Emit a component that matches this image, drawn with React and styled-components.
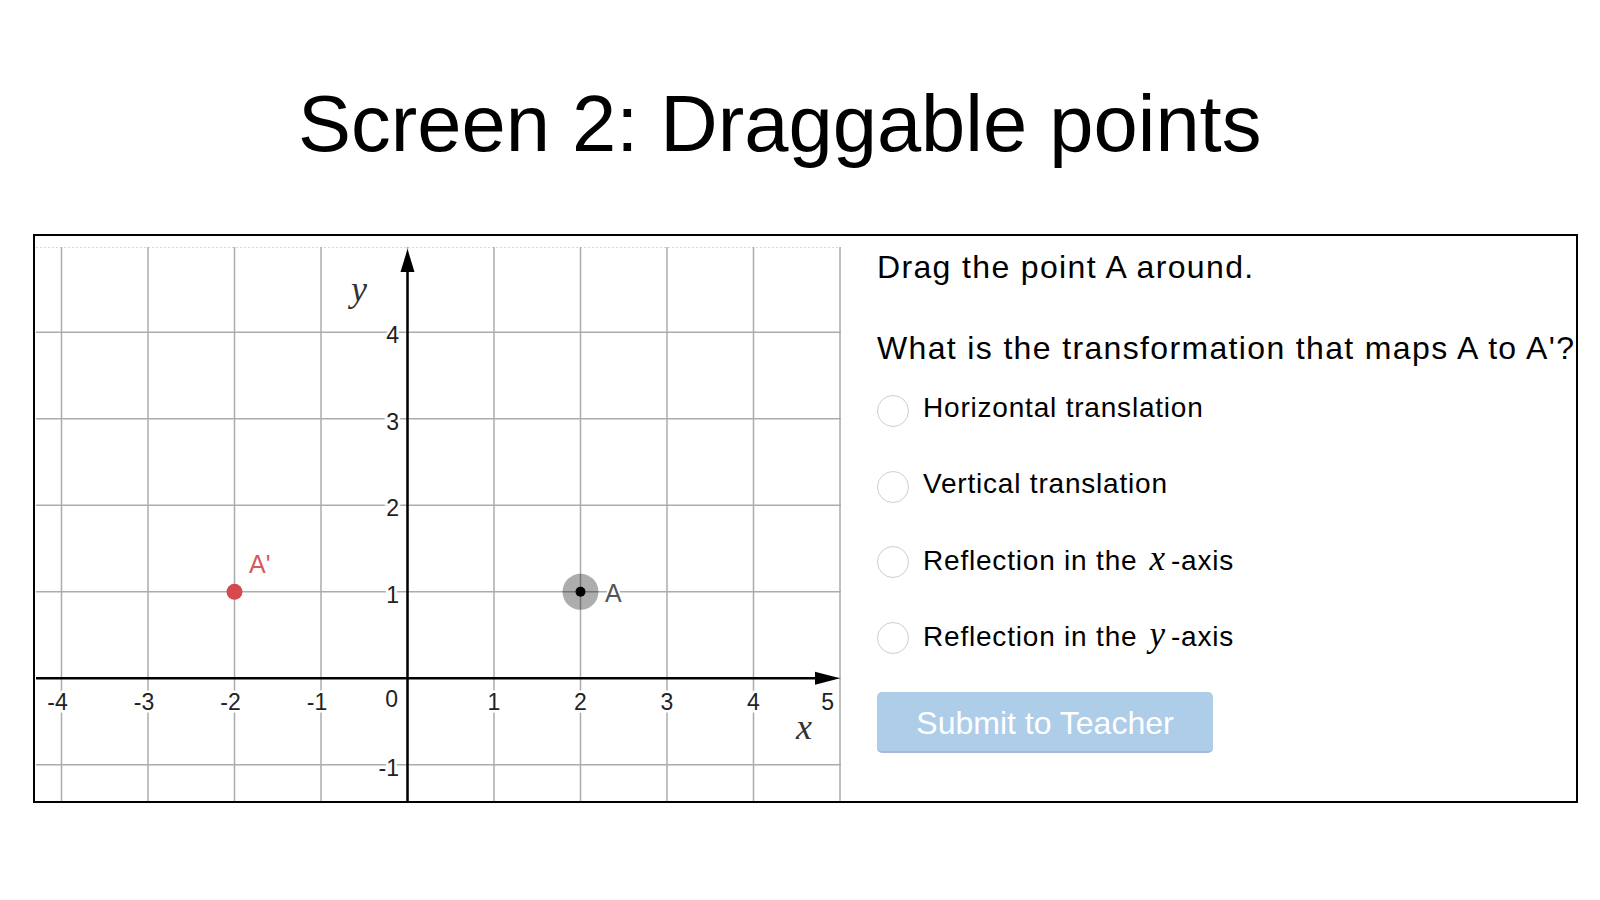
import React from 'react';
import styled, { createGlobalStyle } from 'styled-components';

const GlobalStyle = createGlobalStyle`
  html, body {
    margin: 0;
    padding: 0;
    background: #fff;
  }
  body {
    font-family: 'Liberation Sans', Arial, sans-serif;
    color: #000;
  }
`;

const Page = styled.div`
  width: 1600px;
  height: 900px;
  display: flex;
  flex-direction: column;
  padding-top: 84px;
  box-sizing: border-box;
`;

const Title = styled.h1`
  margin: 0 0 70px;
  padding-left: 298px;
  font-size: 79.5px;
  line-height: 80px;
  font-weight: normal;
  color: #000;
`;

const Card = styled.div`
  margin-left: 33px;
  width: 1545px;
  height: 569px;
  box-sizing: border-box;
  border: 2px solid #000;
  display: flex;
  overflow: hidden;
`;

const GraphPane = styled.div`
  padding: 11px 0 0 1px;
  flex: none;
`;

const Side = styled.div`
  flex: 1;
  padding: 13px 0 0 36px;
  display: flex;
  flex-direction: column;
  align-items: flex-start;
`;

const Prompt = styled.p`
  margin: ${(p) => p.$gap || 0} 0 0;
  font-size: 32px;
  line-height: 36px;
  letter-spacing: 1.35px;
  white-space: nowrap;
`;

const Choices = styled.div`
  margin-top: 29px;
  display: flex;
  flex-direction: column;
  gap: 43.5px;
`;

const Choice = styled.label`
  display: flex;
  align-items: flex-start;
  gap: 14px;
  cursor: pointer;
`;

const Radio = styled.span`
  width: 32px;
  height: 32px;
  box-sizing: border-box;
  border-radius: 50%;
  border: 1px solid #cfcfcf;
  background: #fff;
  flex: none;
`;

const ChoiceText = styled.span`
  margin-top: -3px;
  font-size: 28px;
  line-height: 32px;
  letter-spacing: 0.8px;
  white-space: nowrap;
`;

const MathVar = styled.i`
  font-family: 'Liberation Serif', 'Times New Roman', serif;
  font-size: 35px;
  letter-spacing: 0;
  margin: 0 6px 0 12px;
`;

const SubmitButton = styled.button`
  margin-top: 38px;
  width: 336px;
  height: 61px;
  border: none;
  border-bottom: 2px solid #a7b7df;
  border-radius: 5px;
  background: #aecde9;
  color: #fff;
  font-family: 'Liberation Sans', Arial, sans-serif;
  font-size: 32px;
  padding: 4px 0 0;
  cursor: default;
`;

const AxisNum = styled.text`
  font-family: 'Liberation Sans', Arial, sans-serif;
  font-size: 23px;
  fill: #222;
  stroke: #fff;
  stroke-width: 5px;
  paint-order: stroke;
`;

const PointLabel = styled.text`
  font-family: 'Liberation Sans', Arial, sans-serif;
  font-size: 25px;
  fill: ${(p) => p.$color};
  stroke: #fff;
  stroke-width: 4px;
  paint-order: stroke;
`;

const AxisVar = styled.text`
  font-family: 'Liberation Serif', 'Times New Roman', serif;
  font-style: italic;
  font-size: 36px;
  fill: #333;
`;

// graph geometry (px inside the svg)
const W = 805;
const H = 554;
const U = 86.5;
const OX = 371.5;
const OY = 431.3;
const px = (x) => OX + x * U;
const py = (y) => OY - y * U;

const xs = [-4, -3, -2, -1, 0, 1, 2, 3, 4, 5];
const ys = [-1, 0, 1, 2, 3, 4];

const Graph = () => (
  <svg width={W} height={H} viewBox={`0 0 ${W} ${H}`}>
    <line x1="0" y1="0.5" x2={W} y2="0.5" stroke="#d8d8d8" strokeDasharray="2 2" />
    {xs.map((x) => (
      <line key={`v${x}`} x1={px(x)} y1="0" x2={px(x)} y2={H} stroke="#ababab" strokeWidth="1.5" />
    ))}
    {ys.map((y) => (
      <line key={`h${y}`} x1="0" y1={py(y)} x2={W} y2={py(y)} stroke="#ababab" strokeWidth="1.5" />
    ))}

    {[-4, -3, -2, -1, 1, 2, 3, 4].map((x) => (
      <AxisNum key={`xl${x}`} x={x < 0 ? px(x) - 4 : px(x)} y="463" textAnchor="middle">
        {x < 0 ? `-${-x}` : x}
      </AxisNum>
    ))}
    <AxisNum x="798" y="463" textAnchor="end">5</AxisNum>
    <AxisNum x="362" y="460" textAnchor="end">0</AxisNum>
    {[4, 3, 2, 1, -1].map((y) => (
      <AxisNum key={`yl${y}`} x="363" y={py(y) + 11} textAnchor="end">
        {y < 0 ? `-${-y}` : y}
      </AxisNum>
    ))}

    {/* axes */}
    <line x1="0" y1={OY} x2={W - 22} y2={OY} stroke="#000" strokeWidth="2.5" />
    <polygon points={`${W - 1},${OY} ${W - 26},${OY - 6.5} ${W - 26},${OY + 6.5}`} fill="#000" />
    <line x1={OX} y1={H} x2={OX} y2="22" stroke="#000" strokeWidth="2.5" />
    <polygon points={`${OX},2 ${OX - 7},25 ${OX + 7},25`} fill="#000" />

    <AxisVar x="315" y="54">y</AxisVar>
    <AxisVar x="760" y="492">x</AxisVar>

    {/* A' */}
    <circle cx={px(-2)} cy={py(1)} r="8" fill="#d64a4f" />
    <PointLabel x="213" y="326" $color="#d65a5e">A'</PointLabel>

    {/* A */}
    <circle cx={px(2)} cy={py(1)} r="18" fill="#000" fillOpacity="0.32" />
    <circle cx={px(2)} cy={py(1)} r="5" fill="#000" />
    <PointLabel x="569" y="355" $color="#555">A</PointLabel>
  </svg>
);

const options = [
  { id: 'h', text: 'Horizontal translation' },
  { id: 'v', text: 'Vertical translation' },
  { id: 'x', pre: 'Reflection in the', v: 'x', post: '-axis' },
  { id: 'y', pre: 'Reflection in the', v: 'y', post: '-axis' },
];

const App = () => (
  <>
    <GlobalStyle />
    <Page>
      <Title>Screen 2: Draggable points</Title>
      <Card>
        <GraphPane>
          <Graph />
        </GraphPane>
        <Side>
          <Prompt>Drag the point A around.</Prompt>
          <Prompt $gap="45px">What is the transformation that maps A to A'?</Prompt>
          <Choices>
            {options.map((o) => (
              <Choice key={o.id}>
                <Radio />
                {o.text ? (
                  <ChoiceText>{o.text}</ChoiceText>
                ) : (
                  <ChoiceText>
                    {o.pre}
                    <MathVar>{o.v}</MathVar>
                    {o.post}
                  </ChoiceText>
                )}
              </Choice>
            ))}
          </Choices>
          <SubmitButton>Submit to Teacher</SubmitButton>
        </Side>
      </Card>
    </Page>
  </>
);

export default App;
